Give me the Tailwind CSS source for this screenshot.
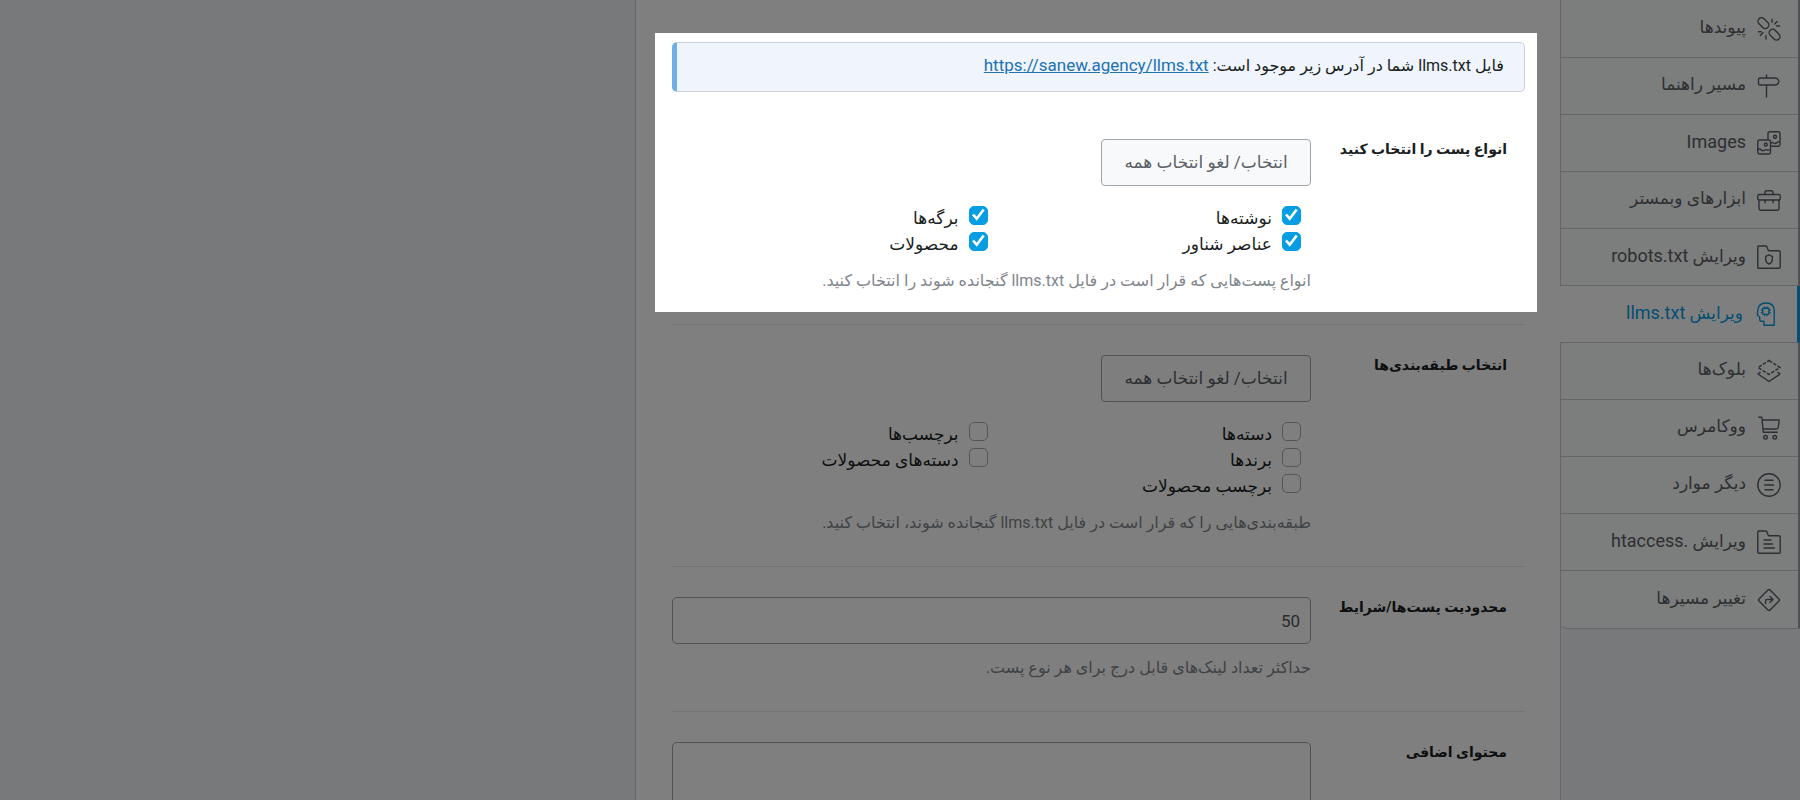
<!DOCTYPE html>
<html lang="fa" dir="rtl">
<head>
    <meta charset="UTF-8">
    <meta name="viewport" content="width=device-width, initial-scale=1.0">
    <title>ویرایش llms.txt</title>
    <script src="https://cdn.jsdelivr.net/npm/@tailwindcss/browser@4"></script>
</head>
<body class="h-screen overflow-hidden bg-[#f0f2f7] font-['Roboto','DejaVu_Sans',sans-serif] text-[#1a1e22]">

    <div class="flex min-h-full w-full max-w-[1165px] items-stretch">

        <!-- Settings tabs -->
        <nav class="w-[239px] shrink-0 text-[17px] text-[#5a6065]">
            <div class="rounded-bl-md border-r-2 border-r-[#a0a2a6] border-b border-b-[#c8ccd6] bg-[#f9fafb] pt-px">
                <a href="#links" class="flex h-[57px] items-center gap-[11px] border-b border-[#c8ccd6] pr-[17px]">
                    <svg class="size-6 shrink-0" viewBox="0 0 24 24" fill="none" stroke="currentColor" stroke-width="1.4" stroke-linecap="round">
                        <rect x="0.2" y="2.6" width="12.4" height="7" rx="3.5" transform="rotate(45 6.4 6.1)"/>
                        <rect x="11.4" y="14.2" width="12.4" height="7" rx="3.5" transform="rotate(45 17.6 17.7)"/>
                        <path d="M15 5.2V2.2M17.6 7l2.6-2.6M19.6 9H22.6M9 18.6V22M6 15.8l-2.6 2.6M4.2 14.8H1.4"/>
                    </svg>
                    <span class="pb-0.5">پیوندها</span>
                </a>
                <a href="#breadcrumbs" class="flex h-[57px] items-center gap-[11px] border-b border-[#c8ccd6] pr-[17px]">
                    <svg class="size-6 shrink-0" viewBox="0 0 24 24" fill="none" stroke="currentColor" stroke-width="1.4" stroke-linecap="round" stroke-linejoin="round">
                        <path d="M3 4h15.5q1.5 0 2.5 1.5l1 2-1 2Q20 11 18.5 11H3q-1.5 0-1.5-1.5v-4Q1.5 4 3 4zM9.5 1v3M9.5 11v12"/>
                    </svg>
                    <span class="pb-0.5">مسیر راهنما</span>
                </a>
                <a href="#images" class="flex h-[57px] items-center gap-[11px] border-b border-[#c8ccd6] pr-[17px]">
                    <svg class="size-6 shrink-0" viewBox="0 0 24 24" fill="none" stroke="currentColor" stroke-width="1.4" stroke-linecap="round" stroke-linejoin="round">
                        <path d="M11 8V2.5Q11 .8 12.7 .8h8.6Q23 .8 23 2.5v11q0 1.7-1.7 1.7H14M14 12q1.5-1.2 2.5 0 2 1.2 3.5-.5 1-1 3-.5"/>
                        <circle cx="18" cy="5.8" r="1.5"/>
                        <rect x=".8" y="9" width="12.7" height="14" rx="1.7"/>
                        <circle cx="8.8" cy="13.6" r="1.5"/>
                        <path d="M1 18.5q2-1 3 .3 1.5 1.5 3 .7 1.5-1.5 3-.5 1.5.5 3.3-.5"/>
                    </svg>
                    <span class="pb-0.5 text-lg">Images</span>
                </a>
                <a href="#webmaster" class="flex h-[57px] items-center gap-[11px] border-b border-[#c8ccd6] pr-[17px]">
                    <svg class="size-6 shrink-0" viewBox="0 0 24 24" fill="none" stroke="currentColor" stroke-width="1.4" stroke-linecap="round" stroke-linejoin="round">
                        <rect x=".8" y="6.5" width="22.4" height="5.5" rx="1.3"/>
                        <path d="M2 12v8.5q0 1.7 1.7 1.7h16.6q1.7 0 1.7-1.7V12M8 6.5V4.5q0-1.8 1.8-1.8h4.4Q16 2.7 16 4.5v2M8 12v2.8M16 12v2.8"/>
                    </svg>
                    <span class="pb-0.5">ابزارهای وبمستر</span>
                </a>
                <a href="#robots" class="flex h-[57px] items-center gap-[11px] border-b border-[#c8ccd6] pr-[17px]">
                    <svg class="size-6 shrink-0" viewBox="0 0 24 24" fill="none" stroke="currentColor" stroke-width="1.4" stroke-linejoin="round">
                        <path d="M2 1h7.5l2 4.8H22q1.2 0 1.2 1.2v15q0 1.2-1.2 1.2H2Q.8 23.2 .8 22V2.2Q.8 1 2 1z"/>
                        <path d="M12 9.8l3.3 1.5v3.5q0 2.7-3.3 4.4-3.3-1.7-3.3-4.4v-3.5z"/>
                    </svg>
                    <span class="pb-0.5">ویرایش <span class="text-lg">robots.txt</span></span>
                </a>
                <a href="#llms" aria-current="page" class="relative -mr-0.5 -ml-px flex h-[57px] items-center gap-[11px] border-r-[3px] border-b border-r-[#069de3] border-b-[#c8ccd6] bg-white pr-[19px] text-[#069de3]">
                    <svg class="size-6 shrink-0" viewBox="-2 0 24 24" fill="none" stroke="currentColor" stroke-width="1.4" stroke-linejoin="round">
                        <path d="M8 23.2v-4H5.5q-1.800 0-1.800-1.800v-2.600L1.500 13.500V9.500Q2 1 10 1q8.200 0 8.200 7.500v14.700z"/>
                        <rect x="6.700" y="6.200" width="6.200" height="6.200" rx=".6"/>
                        <path d="M8.600 6V4.400M11 6V4.400M8.600 14.200v-1.600M11 14.200v-1.600M6.500 8.100H4.900M6.500 10.500H4.900M13.100 8.100h1.600M13.100 10.500h1.600" stroke-width="1.2"/>
                    </svg>
                    <span class="pb-0.5">ویرایش <span class="text-lg">llms.txt</span></span>
                </a>
                <a href="#blocks" class="flex h-[57px] items-center gap-[11px] border-b border-[#c8ccd6] pr-[17px]">
                    <svg class="size-6 shrink-0" viewBox="0 0 24 24" fill="none" stroke="currentColor" stroke-width="1.5" stroke-linejoin="round">
                        <path d="M12 1.5L23 8.5 12 15.5 1 8.5z" stroke-dasharray="3.5 1.5"/>
                        <path d="M3.5 13L1 15l11 7.5L23 15l-2.5-2"/>
                    </svg>
                    <span class="pb-0.5">بلوک‌ها</span>
                </a>
                <a href="#woocommerce" class="flex h-[57px] items-center gap-[11px] border-b border-[#c8ccd6] pr-[17px]">
                    <svg class="size-6 shrink-0" viewBox="0 0 24 24" fill="none" stroke="currentColor" stroke-width="1.4" stroke-linecap="round" stroke-linejoin="round">
                        <path d="M1.8 1.2h3l1.5 15h14M5.2 4h17l-1 7.5q-.2 1.5-1.7 1.5H6"/>
                        <circle cx="8.5" cy="21.3" r="1.8"/>
                        <circle cx="17.8" cy="21.3" r="1.8"/>
                    </svg>
                    <span class="pb-0.5">ووکامرس</span>
                </a>
                <a href="#others" class="flex h-[57px] items-center gap-[11px] border-b border-[#c8ccd6] pr-[17px]">
                    <svg class="size-6 shrink-0" viewBox="0 0 24 24" fill="none" stroke="currentColor" stroke-width="1.4" stroke-linecap="round">
                        <circle cx="12" cy="12" r="11.2"/>
                        <path d="M8 7.2h8M7.5 12h9M8 16.8h8"/>
                    </svg>
                    <span class="pb-0.5">دیگر موارد</span>
                </a>
                <a href="#htaccess" class="flex h-[57px] items-center gap-[11px] border-b border-[#c8ccd6] pr-[17px]">
                    <svg class="size-6 shrink-0" viewBox="0 0 24 24" fill="none" stroke="currentColor" stroke-width="1.4" stroke-linecap="round" stroke-linejoin="round">
                        <path d="M2 1h7.5l2 4.8H22q1.2 0 1.2 1.2v15q0 1.2-1.2 1.2H2Q.8 23.2 .8 22V2.2Q.8 1 2 1z"/>
                        <path d="M7 10h7M7 14h8.500M7 18h10.500"/>
                    </svg>
                    <span class="pb-0.5">ویرایش <span class="text-lg">.htaccess</span></span>
                </a>
                <a href="#redirections" class="flex h-[57px] items-center gap-[11px] pr-[17px]">
                    <svg class="size-6 shrink-0" viewBox="0 0 24 24" fill="none" stroke="currentColor" stroke-width="1.4" stroke-linecap="round" stroke-linejoin="round">
                        <rect x="4.2" y="4.2" width="15.6" height="15.6" rx="1.5" transform="rotate(45 12 12)"/>
                        <path d="M8.5 15.5v-2.3q0-1.7 1.7-1.7H15M13 8.5l3 3-3 3"/>
                    </svg>
                    <span class="pb-0.5">تغییر مسیرها</span>
                </a>
            </div>
        </nav>

        <!-- Settings form -->
        <form class="min-w-0 flex-1 border-x border-[#c8ccd6] bg-white pt-[33px] pr-[35px] pl-9">

            <section class="relative">
                <div class="pt-[9px] pb-[17px]">
                    <p class="flex h-[50px] items-center gap-1 rounded-[5px] border border-l-[5px] border-[#c9d0d8] border-l-[#72aee6] bg-[#eff4fd] pr-5 pb-0.5 text-base">
                        <span>فایل llms.txt شما در آدرس زیر موجود است:</span>
                        <a href="https://sanew.agency/llms.txt" class="text-[17px] text-[#2271b1] underline">https://sanew.agency/llms.txt</a>
                    </p>
                </div>

                <div class="flex border-b border-[#e8e8e8] pt-[30px] pb-[31px]">
                    <h3 class="w-[214px] shrink-0 pr-[18px] text-sm leading-5 font-bold">انواع پست را انتخاب کنید</h3>
                    <div class="min-w-0 flex-1">
                        <button type="button" class="h-[47px] w-[210px] rounded-[4px] border border-[#a0a5aa] bg-[#f8f9fa] text-[17px] text-[#5a6065]">انتخاب/ لغو انتخاب همه</button>
                        <div class="mt-5 grid grid-cols-2 pr-2.5 pl-0.5 text-[17px] leading-6">
                            <label class="flex h-[26px] items-start gap-2.5">
                                <span class="relative size-[19px]"><input type="checkbox" checked class="block size-[19px] appearance-none rounded-[5px] border border-[#b0b3b8] checked:border-[#069de3] checked:bg-[#069de3]"><svg class="pointer-events-none absolute inset-0 size-[19px]" viewBox="0 0 19 19" fill="none" stroke="#fff" stroke-width="2.6"><path d="M4 8.5l3.7 4.2 7-9.2"/></svg></span>
                                نوشته‌ها
                            </label>
                            <label class="flex h-[26px] items-start gap-2.5">
                                <span class="relative size-[19px]"><input type="checkbox" checked class="block size-[19px] appearance-none rounded-[5px] border border-[#b0b3b8] checked:border-[#069de3] checked:bg-[#069de3]"><svg class="pointer-events-none absolute inset-0 size-[19px]" viewBox="0 0 19 19" fill="none" stroke="#fff" stroke-width="2.6"><path d="M4 8.5l3.7 4.2 7-9.2"/></svg></span>
                                برگه‌ها
                            </label>
                            <label class="flex h-[26px] items-start gap-2.5">
                                <span class="relative size-[19px]"><input type="checkbox" checked class="block size-[19px] appearance-none rounded-[5px] border border-[#b0b3b8] checked:border-[#069de3] checked:bg-[#069de3]"><svg class="pointer-events-none absolute inset-0 size-[19px]" viewBox="0 0 19 19" fill="none" stroke="#fff" stroke-width="2.6"><path d="M4 8.5l3.7 4.2 7-9.2"/></svg></span>
                                عناصر شناور
                            </label>
                            <label class="flex h-[26px] items-start gap-2.5">
                                <span class="relative size-[19px]"><input type="checkbox" checked class="block size-[19px] appearance-none rounded-[5px] border border-[#b0b3b8] checked:border-[#069de3] checked:bg-[#069de3]"><svg class="pointer-events-none absolute inset-0 size-[19px]" viewBox="0 0 19 19" fill="none" stroke="#fff" stroke-width="2.6"><path d="M4 8.5l3.7 4.2 7-9.2"/></svg></span>
                                محصولات
                            </label>
                        </div>
                        <p class="mt-[11px] text-base leading-6 text-[#7f868d]">انواع پست‌هایی که قرار است در فایل llms.txt گنجانده شوند را انتخاب کنید.</p>
                    </div>
                </div>

                <!-- Spotlight: dims everything outside this section -->
                <div class="pointer-events-none absolute top-0 -right-3 bottom-[13px] -left-[17px] z-10 shadow-[0_0_0_2000px_rgba(0,0,0,0.5)]"></div>
            </section>

            <div class="flex border-b border-[#e8e8e8] pt-[30px] pb-[31px]">
                <h3 class="w-[214px] shrink-0 pr-[18px] text-sm leading-5 font-bold">انتخاب طبقه‌بندی‌ها</h3>
                <div class="min-w-0 flex-1">
                    <button type="button" class="h-[47px] w-[210px] rounded-[4px] border border-[#a0a5aa] bg-[#fdfdfd] text-[17px] text-[#5a6065]">انتخاب/ لغو انتخاب همه</button>
                    <div class="mt-5 grid grid-cols-2 pr-2.5 pl-0.5 text-[17px] leading-6">
                        <label class="flex h-[26px] items-start gap-2.5">
                            <input type="checkbox" class="size-[19px] appearance-none rounded-[5px] border border-[#a8abb0]">
                            دسته‌ها
                        </label>
                        <label class="flex h-[26px] items-start gap-2.5">
                            <input type="checkbox" class="size-[19px] appearance-none rounded-[5px] border border-[#a8abb0]">
                            برچسب‌ها
                        </label>
                        <label class="flex h-[26px] items-start gap-2.5">
                            <input type="checkbox" class="size-[19px] appearance-none rounded-[5px] border border-[#a8abb0]">
                            برندها
                        </label>
                        <label class="flex h-[26px] items-start gap-2.5">
                            <input type="checkbox" class="size-[19px] appearance-none rounded-[5px] border border-[#a8abb0]">
                            دسته‌های محصولات
                        </label>
                        <label class="flex h-[26px] items-start gap-2.5">
                            <input type="checkbox" class="size-[19px] appearance-none rounded-[5px] border border-[#a8abb0]">
                            برچسب محصولات
                        </label>
                    </div>
                    <p class="mt-[11px] text-base leading-6 text-[#7f868d]">طبقه‌بندی‌هایی را که قرار است در فایل llms.txt گنجانده شوند، انتخاب کنید.</p>
                </div>
            </div>

            <div class="flex border-b border-[#e8e8e8] pt-[30px] pb-[31px]">
                <label for="limit" class="w-[214px] shrink-0 pr-[18px] text-sm leading-5 font-bold">محدودیت پست‌ها/شرایط</label>
                <div class="min-w-0 flex-1">
                    <input id="limit" type="text" value="50" class="block h-[47px] w-full rounded-[5px] border border-[#a0a5aa] px-2.5 text-[17px] text-[#50575e]">
                    <p class="mt-3 text-base leading-6 text-[#7f868d]">حداکثر تعداد لینک‌های قابل درج برای هر نوع پست.</p>
                </div>
            </div>

            <div class="flex pt-[30px]">
                <label for="extra" class="w-[214px] shrink-0 pr-[18px] text-sm leading-5 font-bold">محتوای اضافی</label>
                <div class="min-w-0 flex-1">
                    <textarea id="extra" rows="8" class="block w-full resize-none rounded-[5px] border border-[#a0a5aa] px-3 py-2 text-base"></textarea>
                </div>
            </div>
        </form>
    </div>

</body>
</html>
